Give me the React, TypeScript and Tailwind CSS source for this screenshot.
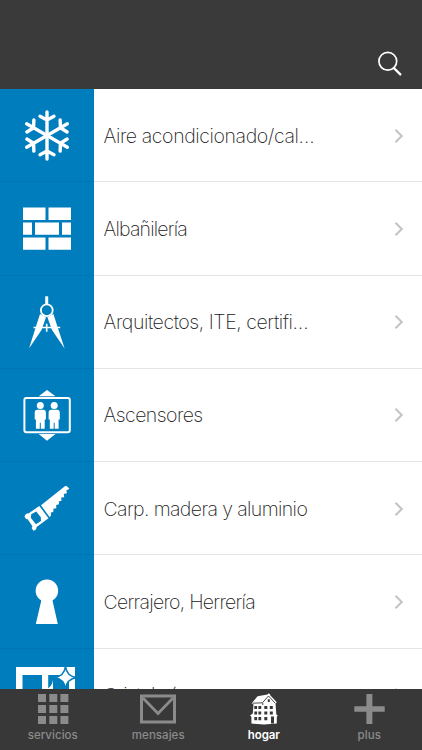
import React from "react";

interface Category {
  name: string;
  icon: React.ReactNode;
  textClass: string;
}

const SnowflakeIcon = () => (
  <g stroke="white" strokeWidth={3.4} strokeLinecap="round" strokeLinejoin="round" fill="none">
    {[0, 60, 120, 180, 240, 300].map((angle) => (
      <path
        key={angle}
        d="M47 46.5V23M40 27.3L47 31L54 27.3"
        transform={`rotate(${angle} 47 46.5)`}
      />
    ))}
  </g>
);

const BricksIcon = () => (
  <path
    fill="white"
    d="M23 25.5h22.5v12.5H23zM48.5 25.5H71v12.5H48.5zM23 40.6h9v12.2h-9zM35 40.6h24v12.2H35zM62 40.6h9v12.2h-9zM23 55.6h22.5v12.2H23zM48.5 55.6H71v12.2H48.5z"
  />
);

const CompassIcon = () => (
  <g>
    <path fill="white" d="M45.2 20.3h3v8h-3z" />
    <circle cx={46.8} cy={34.3} r={5.9} fill="none" stroke="white" strokeWidth={1.8} />
    <path fill="white" d="M40 38L46 41.2L41.5 54L29 72.5L36.3 49.5z" />
    <path fill="white" d="M53.4 38L47.4 41.2L52 54L64.6 72.5L57.1 49.5z" />
    <path stroke="white" strokeWidth={1.6} d="M33.5 51.5H60.2M46.7 47.7V55.7" />
  </g>
);

const ElevatorIcon = () => (
  <g fill="white">
    <path d="M38.7 27.3L47 21L55.5 27.3zM38.7 65L47 71.8L55.5 65z" />
    <rect x={24.4} y={29} width={45.4} height={34.3} rx={2} fill="none" stroke="white" strokeWidth={2} />
    <circle cx={40.3} cy={36.6} r={3.5} />
    <circle cx={54.2} cy={36.6} r={3.5} />
    <path d="M37.4 40.7h5.8q2.7 0 2.7 3v6.8h-1.2v9.2h-3.9v-6h-1v6h-3.9v-9.2h-1.2v-6.8q0-3 2.7-3z" />
    <path d="M51.3 40.7h5.8q2.7 0 2.7 3v6.8h-1.2v9.2h-3.9v-6h-1v6h-3.9v-9.2h-1.2v-6.8q0-3 2.7-3z" />
  </g>
);

const SawIcon = () => (
  <g fill="white">
    <path d="M41 43.3L65.2 24L67 24.2L69.4 26.8L66.4 28.4L66.8 31.6L63.8 31.7L64.2 35.2L61.2 35.6L61.5 38.8L58.8 39.4L59 42.2L56.2 43L56.3 46.2L53.4 46.8L53.3 50L50.9 50.5L51 53.7L49.5 55z" />
    <path
      fillRule="evenodd"
      d="M24.4 54.2Q26 51 28.5 51.4L39.3 43.9L48.5 56.2L36.6 65.1Q36.6 68.2 33.4 68.7L31.6 66.1L32.5 64.6L27.7 57.2L26 56.9zM31.2 52.3L30.9 56.1L36 62.2L41 58.9L40.8 55.2L36.2 49.6z"
    />
  </g>
);

const KeyholeIcon = () => (
  <path fill="white" d="M41.3 45.6A11.3 11.3 0 1 1 52.5 45.6L57.8 69H35.8z" />
);

const WindowIcon = () => (
  <g>
    <path fill="white" fillRule="evenodd" d="M16 18h59v50H16zM22.5 26v38H42v-38zM48.2 26v38H69v-38z" />
    <path
      fill="white"
      stroke="#007dbd"
      strokeWidth={1.5}
      d="M65.5 17Q66.5 27.5 77 28.5Q66.5 30 65.5 40Q64.5 30 54 28.5Q64.5 27.5 65.5 17z"
    />
    <path fill="white" d="M53 31Q52 39 43 42H53z" />
  </g>
);

const categories: Category[] = [
  { name: "Aire acondicionado/cal…", icon: <SnowflakeIcon />, textClass: "tracking-[-0.4px]" },
  { name: "Albañilería", icon: <BricksIcon />, textClass: "tracking-[-0.82px]" },
  { name: "Arquitectos, ITE, certifi…", icon: <CompassIcon />, textClass: "tracking-[-0.42px]" },
  { name: "Ascensores", icon: <ElevatorIcon />, textClass: "tracking-[-0.55px]" },
  { name: "Carp. madera y aluminio", icon: <SawIcon />, textClass: "tracking-[-0.61px]" },
  { name: "Cerrajero, Herrería", icon: <KeyholeIcon />, textClass: "tracking-[-0.72px]" },
  { name: "Cristalería", icon: <WindowIcon />, textClass: "tracking-[-0.6px]" },
];

const GridIcon = () => (
  <path
    fill="currentColor"
    d="M2 1h8v8H2zM13.3 1h8v8h-8zM24.4 1h8v8h-8zM2 12h8v8H2zM13.3 12h8v8h-8zM24.4 12h8v8h-8zM2 23h8v8H2zM13.3 23h8v8h-8zM24.4 23h8v8h-8z"
  />
);

const MailIcon = () => (
  <g fill="none" stroke="currentColor">
    <path strokeWidth={3} d="M1.5 3h33v26h-33z" />
    <path strokeWidth={2.8} d="M3 5L18 20.5L33 5" />
  </g>
);

const HouseIcon = () => (
  <g>
    <path
      fill="currentColor"
      d="M3.6 10.4L9.6 3.2L19.4 1.6L20.4.6L22 1L22.2 2.2L28.8 9.2L27.5 10.2L28.3 21.5L29.8 22.5L28.8 23.7V30.5L16 31.6L3.4 30.5V23.7L2 22.5L4.8 20.5L5.5 11.2z"
    />
    <path
      fill="#383838"
      d="M6.3 13h2.8v3H6.3zM10.4 13h2.8v3h-2.8zM16.3 13h3v3h-3zM21.8 13h3v3h-3zM6.3 18.5h2.8v3H6.3zM10.4 18.5h2.8v3h-2.8zM16.3 18.5h3v3h-3zM21.8 18.5h3v3h-3zM6.3 24h2.8v3.2H6.3zM10.4 24h2.8v3.2h-2.8zM16.3 24h3v3.2h-3zM23 23.5h3v7h-3zM19.8 6.2h2v2.8h-2z"
    />
    <path fill="none" stroke="#383838" strokeWidth={0.9} d="M4.5 10.2L14.4 9.8L20.5 3L27 10M14.8 10V12" />
  </g>
);

const PlusIcon = () => (
  <path fill="currentColor" d="M12.4 1h6v12.3h12.3v5.5H18.4V31h-6V18.8H.3v-5.5h12.1z" />
);

const tabs = [
  { label: "servicios", icon: <GridIcon />, width: 34, active: false },
  { label: "mensajes", icon: <MailIcon />, width: 36, active: false },
  { label: "hogar", icon: <HouseIcon />, width: 32, active: true },
  { label: "plus", icon: <PlusIcon />, width: 31, active: false },
];

const CategoryRow: React.FC<{ category: Category }> = ({ category }) => (
  <li className="flex h-[93.25px] shrink-0 items-stretch">
    <div className="w-[93.5px] shrink-0 border-b border-[#0075b4] bg-[#007dbd]">
      <svg viewBox="0 0 94 93" width={94} height={93} className="block">
        {category.icon}
      </svg>
    </div>
    <div className="flex min-w-0 flex-1 items-center border-b border-[#e4e4e6] pt-px pr-[18px] pl-[10px]">
      <span className={`flex-1 pt-px whitespace-nowrap text-[19.5px] font-extralight text-[#202020] ${category.textClass}`}>
        {category.name}
      </span>
      <svg viewBox="0 0 10 16" width={10} height={16} className="block">
        <path d="M1.5 1.8L7.7 8L1.5 14.2" fill="none" stroke="#c4c4c8" strokeWidth={2.1} />
      </svg>
    </div>
  </li>
);

export default function App() {
  return (
    <div className="flex h-[750px] w-[422px] flex-col overflow-hidden bg-white font-['Inter','Liberation_Sans',sans-serif]">
      <header className="flex h-[89px] shrink-0 items-end justify-end bg-[#3a3a3a] pr-5 pb-[12px]">
        <svg viewBox="0 0 25 26" width={25} height={26} fill="none" stroke="white">
          <circle cx={10.8} cy={10.3} r={8.9} strokeWidth={1.7} />
          <path d="M16.8 17L23.3 23.4" strokeWidth={2.4} strokeLinecap="round" />
        </svg>
      </header>
      <ul className="flex h-[600px] shrink-0 flex-col overflow-hidden">
        {categories.map((category) => (
          <CategoryRow key={category.name} category={category} />
        ))}
      </ul>
      <nav className="grid h-[61px] grid-cols-4 bg-[#383838]">
        {tabs.map((tab) => (
          <div
            key={tab.label}
            className={`flex flex-col items-center pt-1 ${tab.active ? "text-white" : "text-[#8b8b8b]"}`}
          >
            <svg viewBox={`0 0 ${tab.width} 32`} width={tab.width} height={32} className="block">
              {tab.icon}
            </svg>
            <span
              className={`mt-[2px] text-[11.5px] leading-4 ${
                tab.active ? "font-semibold tracking-[-0.1px]" : "font-medium tracking-[0.05px]"
              }`}
            >
              {tab.label}
            </span>
          </div>
        ))}
      </nav>
    </div>
  );
}
